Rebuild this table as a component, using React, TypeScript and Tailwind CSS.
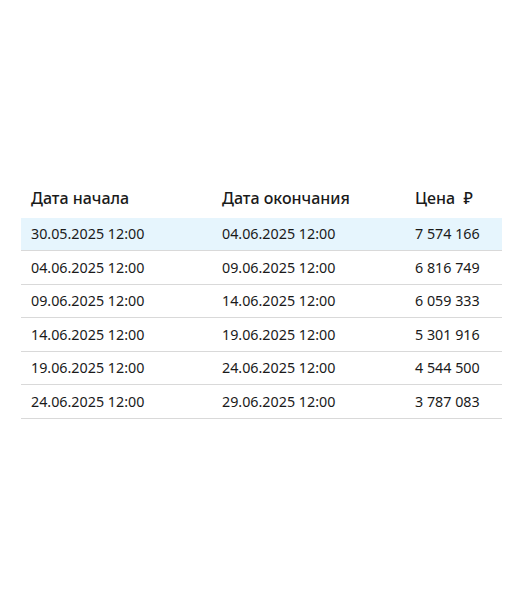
import React from "react";

const rows = [
    { start: "30.05.2025 12:00", end: "04.06.2025 12:00", price: "7 574 166" },
    { start: "04.06.2025 12:00", end: "09.06.2025 12:00", price: "6 816 749" },
    { start: "09.06.2025 12:00", end: "14.06.2025 12:00", price: "6 059 333" },
    { start: "14.06.2025 12:00", end: "19.06.2025 12:00", price: "5 301 916" },
    { start: "19.06.2025 12:00", end: "24.06.2025 12:00", price: "4 544 500" },
    { start: "24.06.2025 12:00", end: "29.06.2025 12:00", price: "3 787 083" },
];

export default function App() {
    return (
        <div
            className="flex min-h-screen items-center bg-white text-[#1a1a1a]"
            style={{ fontFamily: '"Noto Sans", "Open Sans", sans-serif' }}
        >
            <div className="ml-[21px] mt-[1px] w-[481px]">
                <div className="grid grid-cols-[191px_193px_1fr] px-[10px] pb-[4px] h-[35px] items-center text-[16px] font-medium">
                    <div>Дата начала</div>
                    <div>Дата окончания</div>
                    <div>Цена&nbsp;&nbsp;₽</div>
                </div>
                {rows.map((r, i) => (
                    <div
                        key={r.start}
                        className={`grid grid-cols-[191px_193px_1fr] px-[10px] h-[33.5px] items-center text-[14.3px] border-b border-[#d9d9d9] ${
                            i === 0 ? "bg-[#e6f5fd]" : ""
                        }`}
                    >
                        <div>{r.start}</div>
                        <div>{r.end}</div>
                        <div>{r.price}</div>
                    </div>
                ))}
            </div>
        </div>
    );
}
